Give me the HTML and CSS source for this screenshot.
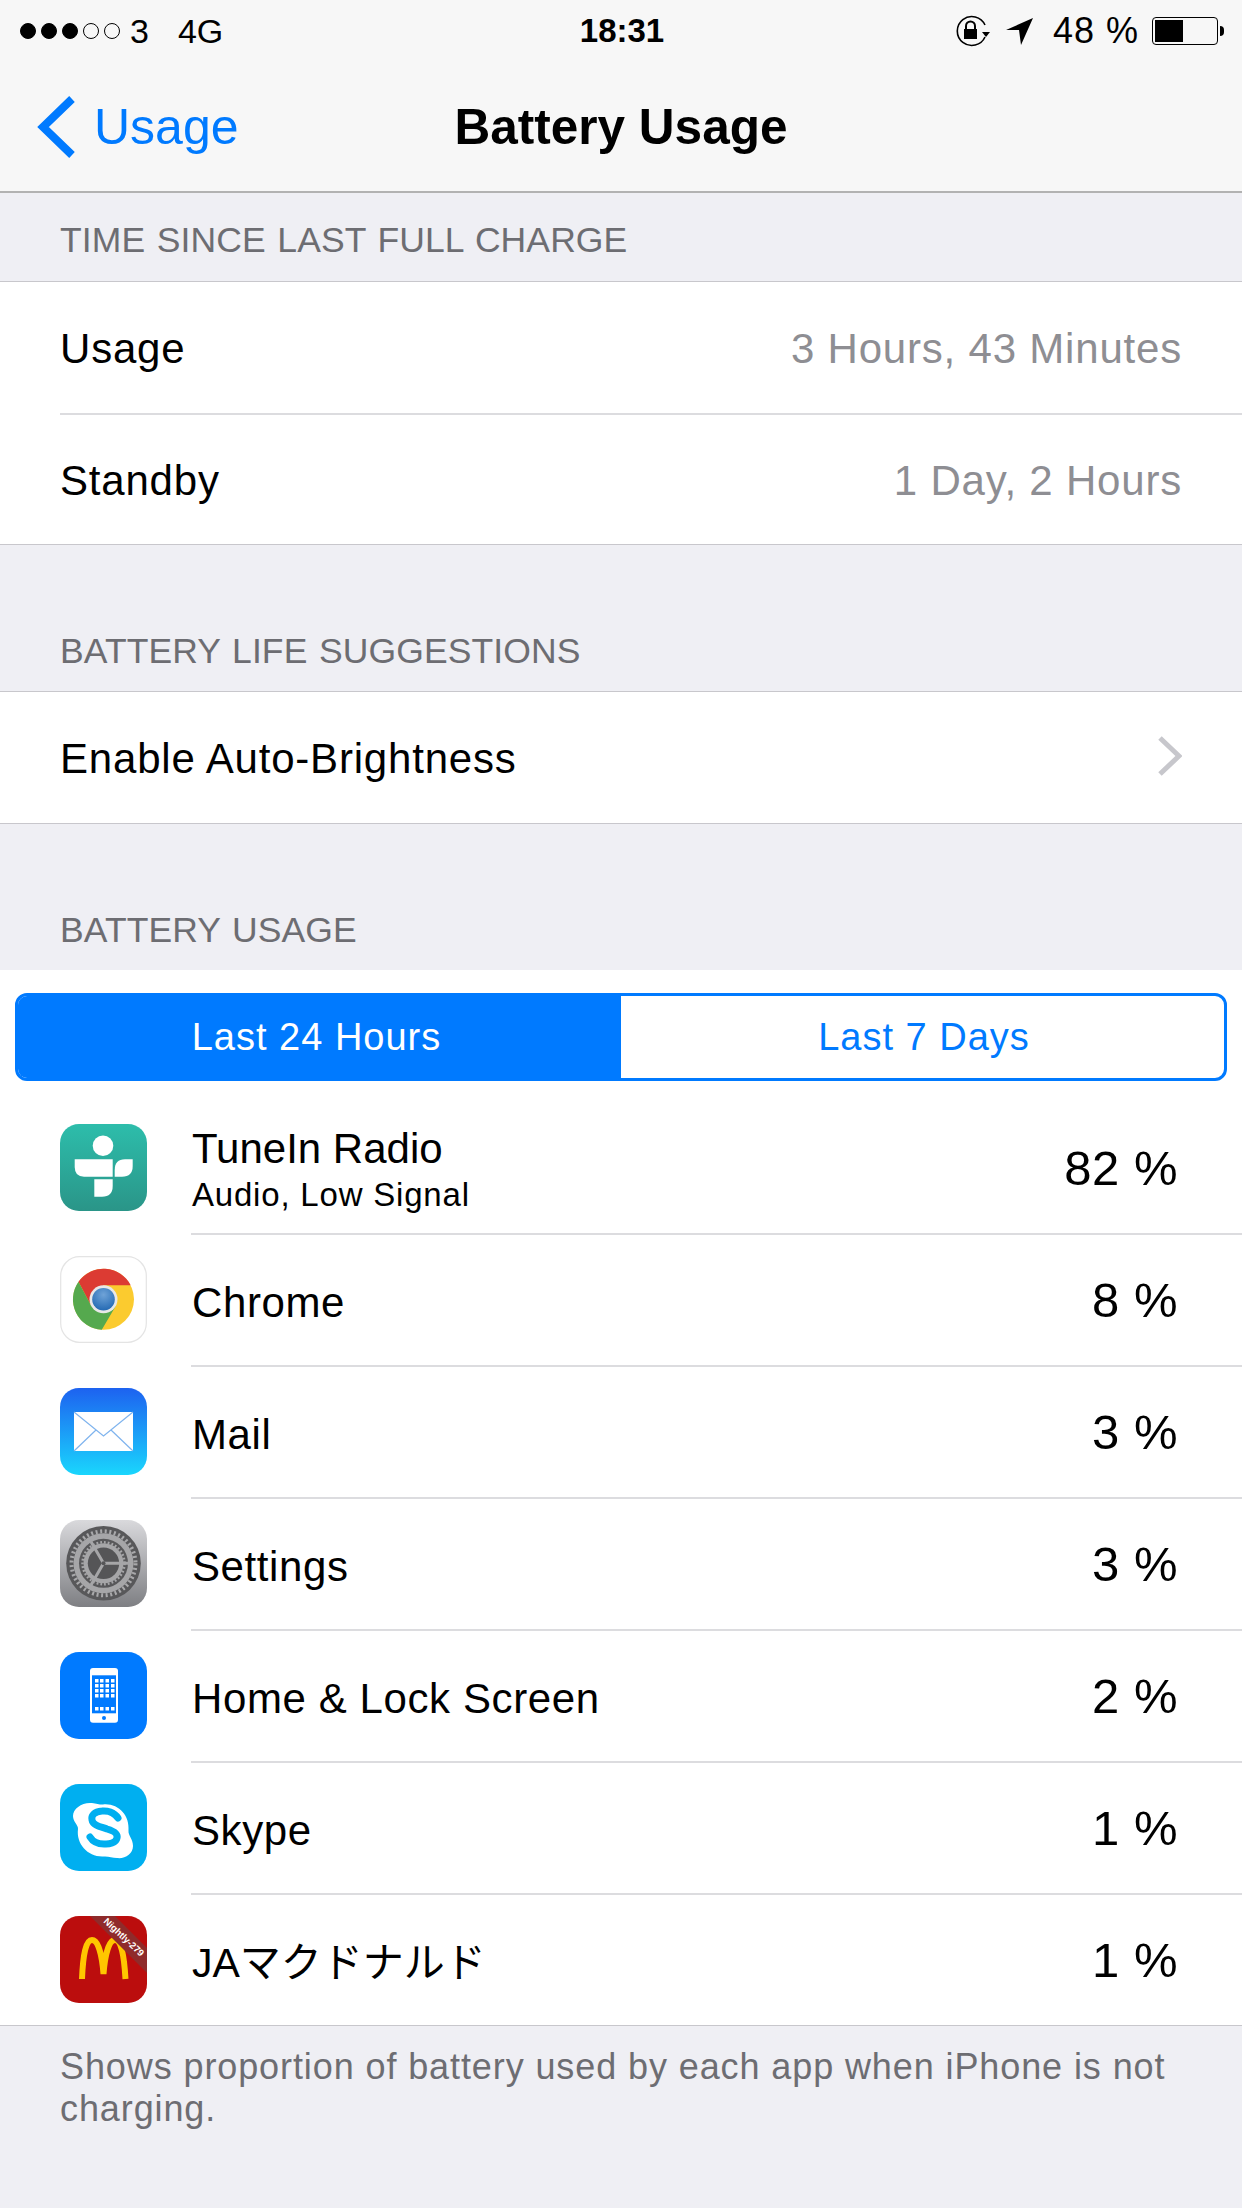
FILE: index.html
```html
<!DOCTYPE html>
<html lang="en">
<head>
	<meta charset="UTF-8">
	<title>Battery Usage</title>
	<link rel="stylesheet" href="styles.css">
</head>
<body>
	<header class="topbar">
		<div class="status">
			<div class="status-left">
				<span class="dot on"></span><span class="dot on"></span><span class="dot on"></span><span class="dot"></span><span class="dot"></span>
				<span class="carrier">3</span>
				<span class="network">4G</span>
			</div>
			<div class="clock">18:31</div>
			<div class="status-right">
				<svg class="lock-icon" width="36" height="32" viewBox="0 0 36 32">
					<path d="M30 22 A14.5 14.5 0 1 1 30 10" fill="none" stroke="#000" stroke-width="1.6"/>
					<path d="M27 17 h8 l-4 5 z" fill="#000"/>
					<path d="M11 14 v-3 a4.5 4.5 0 0 1 9 0 v3" fill="none" stroke="#000" stroke-width="2"/>
					<rect x="9" y="14" width="13" height="10" fill="#000"/>
				</svg>
				<svg class="arrow-icon" width="27" height="27" viewBox="0 0 27 27">
					<path d="M0 12 L27 0 L15 27 L13 12 Z" fill="#000"/>
				</svg>
				<span class="percent">48 %</span>
				<div class="battery"><div class="battery-fill"></div></div>
				<div class="battery-tip"></div>
			</div>
		</div>
		<nav class="nav">
			<a class="back" href="#">
				<svg width="38" height="62" viewBox="0 0 38 62">
					<path d="M35 3 L6 31 L35 59" fill="none" stroke="#007aff" stroke-width="8"/>
				</svg>
				<span>Usage</span>
			</a>
			<h1 class="title">Battery Usage</h1>
		</nav>
	</header>

	<h2 class="section-head first">TIME SINCE LAST FULL CHARGE</h2>
	<ul class="group">
		<li class="row"><span>Usage</span><span class="value">3 Hours, 43 Minutes</span></li>
		<li class="row"><span>Standby</span><span class="value">1 Day, 2 Hours</span></li>
	</ul>

	<h2 class="section-head">BATTERY LIFE SUGGESTIONS</h2>
	<ul class="group">
		<li class="row">
			<span>Enable Auto-Brightness</span>
			<svg class="chevron" width="24" height="40" viewBox="0 0 24 40">
				<path d="M2 2 L21 20 L2 38" fill="none" stroke="#c7c7cc" stroke-width="5"/>
			</svg>
		</li>
	</ul>

	<h2 class="section-head">BATTERY USAGE</h2>
	<section class="usage">
		<div class="segment">
			<div class="segment-item active">Last 24 Hours</div>
			<div class="segment-item">Last 7 Days</div>
		</div>
		<ul class="apps">
			<li class="app">
				<svg class="app-icon" viewBox="0 0 87 87">
					<defs><linearGradient id="tunein" x1="0" y1="0" x2="0" y2="1"><stop offset="0" stop-color="#2dbdab"/><stop offset="1" stop-color="#2a9588"/></linearGradient></defs>
					<rect width="87" height="87" rx="19" fill="url(#tunein)"/>
					<circle cx="43" cy="21.7" r="10.3" fill="#fff"/>
					<path d="M14.7 35.3 H52.7 V52.7 H24 Q14.7 52.7 14.7 43 Z" fill="#fff"/>
					<path d="M72.7 35.3 V42 Q72.7 52.7 62 52.7 H54.7 V46 Q54.7 35.3 65 35.3 Z" fill="#fff"/>
					<path d="M34.3 55.3 H52.7 V62 Q52.7 72.7 42 72.7 H34.3 Z" fill="#fff"/>
				</svg>
				<div class="app-text">
					<div class="app-name two-line">TuneIn Radio</div>
					<div class="app-note">Audio, Low Signal</div>
				</div>
				<div class="app-pct">82 %</div>
			</li>
			<li class="app">
				<svg class="app-icon" viewBox="0 0 87 87">
					<defs><radialGradient id="chromeblue" cx="0.5" cy="0.3" r="0.8"><stop offset="0" stop-color="#6fa3d8"/><stop offset="1" stop-color="#1a62ae"/></radialGradient></defs>
					<rect x="0.7" y="0.7" width="85.6" height="85.6" rx="19" fill="#fff" stroke="#e4e4e4" stroke-width="1.2"/>
					<g transform="translate(43.5 43.3)">
						<circle r="30.5" fill="#fbcb2f"/>
						<path d="M-25 -17.5 A30.5 30.5 0 0 1 27.2 -14 L0 -14 L-12.1 7 Z" fill="#dc3b33"/>
						<path d="M-25 -17.5 A30.5 30.5 0 0 0 -1.7 30.5 L12.1 7 L-12.1 7 Z" fill="#55a94e"/>
						<circle r="14" fill="#e8e8e8"/>
						<circle r="11.3" fill="url(#chromeblue)"/>
					</g>
				</svg>
				<div class="app-name">Chrome</div>
				<div class="app-pct">8 %</div>
			</li>
			<li class="app">
				<svg class="app-icon" viewBox="0 0 87 87">
					<defs><linearGradient id="mail" x1="0" y1="0" x2="0" y2="1"><stop offset="0" stop-color="#1d62f0"/><stop offset="1" stop-color="#1ad6fd"/></linearGradient></defs>
					<rect width="87" height="87" rx="19" fill="url(#mail)"/>
					<rect x="14" y="24" width="59" height="39" fill="#fff"/>
					<path d="M14 24 L43.5 48 L73 24 M14 63 L36 42 M73 63 L51 42" fill="none" stroke="#7fb4ee" stroke-width="1.2"/>
				</svg>
				<div class="app-name">Mail</div>
				<div class="app-pct">3 %</div>
			</li>
			<li class="app">
				<svg class="app-icon" viewBox="0 0 87 87">
					<defs><linearGradient id="gear" x1="0" y1="0" x2="0" y2="1"><stop offset="0" stop-color="#d9d9dc"/><stop offset="1" stop-color="#7e7f83"/></linearGradient></defs>
					<rect width="87" height="87" rx="19" fill="url(#gear)"/>
					<g transform="translate(43.5 43.3)">
						<circle r="37.3" fill="#58585a"/>
						<circle r="32" fill="none" stroke="#a9a9ab" stroke-width="4" stroke-dasharray="2 2.6"/>
						<circle r="30" fill="#a6a6a8"/>
						<circle r="24.5" fill="#58585a"/>
						<circle r="21" fill="none" stroke="#a6a6a8" stroke-width="2.5" stroke-dasharray="1.8 2"/>
						<circle r="20" fill="#a6a6a8"/>
						<circle r="15.7" fill="#555557"/>
						<path d="M0 0 H25 M0 0 L-12.500 -21.650 M0 0 L-12.500 21.650" stroke="#a6a6a8" stroke-width="3"/>
						<circle r="2" fill="#555557"/>
					</g>
				</svg>
				<div class="app-name">Settings</div>
				<div class="app-pct">3 %</div>
			</li>
			<li class="app">
				<svg class="app-icon" viewBox="0 0 87 87">
					<rect width="87" height="87" rx="19" fill="#007aff"/>
					<rect x="30" y="16" width="28" height="54.7" rx="3" fill="#fff"/>
					<rect x="32" y="23.3" width="24" height="38" fill="#007aff"/>
					<g fill="#fff">
						<rect x="35" y="27" width="3.5" height="3.5"/><rect x="40" y="27" width="3.5" height="3.5"/><rect x="45.500" y="27" width="3.5" height="3.5"/><rect x="51" y="27" width="3.5" height="3.5"/>
						<rect x="35" y="32" width="3.5" height="3.5"/><rect x="40" y="32" width="3.5" height="3.5"/><rect x="45.500" y="32" width="3.5" height="3.5"/><rect x="51" y="32" width="3.5" height="3.5"/>
						<rect x="35" y="37" width="3.5" height="3.5"/><rect x="40" y="37" width="3.5" height="3.5"/><rect x="45.500" y="37" width="3.5" height="3.5"/><rect x="51" y="37" width="3.5" height="3.5"/>
						<rect x="35" y="42" width="3.5" height="3.5"/><rect x="40" y="42" width="3.5" height="3.5"/><rect x="45.500" y="42" width="3.5" height="3.5"/><rect x="51" y="42" width="3.5" height="3.5"/>
						<rect x="35" y="55" width="3.5" height="3.5"/><rect x="40" y="55" width="3.5" height="3.5"/><rect x="45.500" y="55" width="3.5" height="3.5"/><rect x="51" y="55" width="3.5" height="3.5"/>
					</g>
					<circle cx="44" cy="66" r="2" fill="#007aff"/>
				</svg>
				<div class="app-name">Home &amp; Lock Screen</div>
				<div class="app-pct">2 %</div>
			</li>
			<li class="app">
				<svg class="app-icon" viewBox="0 0 87 87">
					<rect width="87" height="87" rx="19" fill="#00aff0"/>
					<path d="M30 19 C36 19 38 21 43 20.5 C58 19 70 31 68.500 47 C68 51 73 55 73 62 C73 70 65 75 57 74 C52 73.500 48 72 43 72.500 C28 73 16 60 18 45 C18.500 41 13 38 13 32 C13 25 21 19 30 19 Z" fill="#fff"/>
					<path d="M58 34 C54 28 47 26.500 42 27 C34 27.500 31 32 32 36 C33 42 42 43 47 45 C54 47 58 50 57 54 C56 59 49 60.500 44 60 C38 60 33 58 30 53" fill="none" stroke="#00aff0" stroke-width="7" stroke-linecap="round"/>
				</svg>
				<div class="app-name">Skype</div>
				<div class="app-pct">1 %</div>
			</li>
			<li class="app">
				<svg class="app-icon" viewBox="0 0 87 87">
					<defs><clipPath id="mcclip"><rect width="87" height="87" rx="19"/></clipPath></defs>
					<g clip-path="url(#mcclip)">
						<rect width="87" height="87" fill="#bb0d0d"/>
						<path d="M22 63 C23 38 26 24 32 24 C38 24 42 38 43.500 58 C45 38 49 24 55 24 C61 24 64 38 65.500 63" fill="none" stroke="#ffc600" stroke-width="6"/>
						<path d="M30 0 H55 L87 32 V57 Z" fill="#8f2b2b"/>
						<text class="ribbon" transform="translate(43 6) rotate(43)" x="0" y="0">Nightly-279</text>
					</g>
				</svg>
				<div class="app-name cjk">JAマクドナルド</div>
				<div class="app-pct">1 %</div>
			</li>
		</ul>
	</section>
	<p class="footnote">Shows proportion of battery used by each app when iPhone is not charging.</p>
</body>
</html>
```

FILE: styles.css
```css
html, body, h1, h2, ul, li, p {
	margin: 0;
	padding: 0;
}
ul {
	list-style: none;
}
a {
	text-decoration: none;
}
body {
	width: 1242px;
	height: 2208px;
	overflow: hidden;
	background: #efeff4;
	font-family: "Liberation Sans", "Noto Sans CJK JP", sans-serif;
	color: #000;
}

/* status bar and nav */
.topbar {
	height: 191px;
	background: #f7f7f7;
	border-bottom: 2px solid #b2b2b2;
}
.status {
	height: 62px;
	padding: 0 18px 0 20px;
	display: grid;
	grid-template-columns: 1fr auto 1fr;
	align-items: center;
	font-size: 34px;
}
.status-left {
	display: flex;
	align-items: center;
	gap: 5px;
}
.dot {
	width: 16px;
	height: 16px;
	box-sizing: border-box;
	border: 1.5px solid #000;
	border-radius: 50%;
}
.dot.on {
	background: #000;
}
.carrier {
	margin-left: 5px;
}
.network {
	margin-left: 24px;
}
.clock {
	font-weight: bold;
	font-size: 33px;
}
.status-right {
	display: flex;
	align-items: center;
	justify-content: flex-end;
}
.lock-icon {
	margin-right: 15px;
}
.arrow-icon {
	margin-right: 20px;
}
.percent {
	margin-right: 13px;
	font-size: 36px;
	letter-spacing: 1px;
}
.battery {
	width: 66px;
	height: 28px;
	box-sizing: border-box;
	padding: 2px;
	border: 1.5px solid #000;
	border-radius: 4px;
}
.battery-fill {
	width: 47%;
	height: 100%;
	background: #000;
}
.battery-tip {
	width: 4px;
	height: 10px;
	margin-left: 2px;
	background: #000;
	border-radius: 0 5px 5px 0;
}
.nav {
	height: 129px;
	display: flex;
	align-items: center;
	position: relative;
	padding-left: 37px;
}
.back {
	display: flex;
	align-items: center;
	gap: 19px;
	color: #007aff;
	font-size: 50px;
}
.title {
	position: absolute;
	left: 0;
	right: 0;
	text-align: center;
	font-size: 49.5px;
	font-weight: bold;
	pointer-events: none;
}

/* grouped table */
.section-head {
	height: 146px;
	box-sizing: border-box;
	display: flex;
	align-items: flex-end;
	padding: 0 60px 19px;
	font-size: 35.5px;
	letter-spacing: 0.1px;
	word-spacing: 1.6px;
	font-weight: normal;
	color: #6d6d72;
}
.section-head.first {
	height: 88px;
	padding-bottom: 20px;
}
.group {
	background: #fff;
	border-top: 1px solid #c8c7cc;
	border-bottom: 1px solid #c8c7cc;
}
.row {
	height: 131px;
	box-sizing: border-box;
	margin-left: 60px;
	padding: 2px 60px 0 0;
	display: flex;
	align-items: center;
	justify-content: space-between;
	font-size: 42px;
	letter-spacing: 0.8px;
}
.row + .row {
	border-top: 2px solid #dcdcdf;
}
.value {
	color: #8e8e93;
}
.chevron {
	margin-bottom: 6px;
}

/* battery usage list */
.usage {
	background: #fff;
	padding-top: 23px;
	border-bottom: 1px solid #c8c7cc;
}
.segment {
	height: 88px;
	margin: 0 15px;
	box-sizing: border-box;
	display: flex;
	border: 3px solid #007aff;
	border-radius: 12px;
	overflow: hidden;
	font-size: 38px;
	letter-spacing: 1px;
	color: #007aff;
}
.segment-item {
	width: 50%;
	box-sizing: border-box;
	padding-left: 3px;
	display: flex;
	align-items: center;
	justify-content: center;
}
.segment-item.active {
	padding: 0 6px 0 0;
	background: #007aff;
	color: #fff;
}
.apps {
	padding-top: 20px;
}
.app {
	height: 132px;
	display: flex;
	align-items: center;
	padding-left: 60px;
	position: relative;
}
.app + .app::before {
	content: '';
	position: absolute;
	left: 191px;
	right: 0;
	top: 0;
	height: 2px;
	background: #dcdcdf;
}
.app-icon {
	width: 87px;
	height: 87px;
	flex: none;
	margin-right: 45px;
}
.app-text {
	flex: 1;
	padding-top: 4px;
}
.app-name {
	flex: 1;
	padding-top: 8px;
	font-size: 42px;
	letter-spacing: 0.6px;
}
.app-name.two-line {
	padding-top: 0;
	line-height: 46px;
	letter-spacing: 0;
}
.app-name.cjk {
	padding-top: 0;
	font-size: 41px;
	letter-spacing: 0;
}
.app-note {
	margin-top: 5px;
	font-size: 33px;
	line-height: 36px;
	letter-spacing: 0.8px;
}
.app-pct {
	width: 200px;
	padding: 2px 64px 0 0;
	box-sizing: border-box;
	text-align: right;
	font-size: 49px;
	letter-spacing: 0.5px;
}
.ribbon {
	font-family: "Liberation Sans", sans-serif;
	font-size: 9.5px;
	font-weight: bold;
	fill: #fff;
}

.footnote {
	padding: 20px 60px 0;
	font-size: 36px;
	letter-spacing: 0.9px;
	line-height: 42px;
	color: #6d6d72;
}
```
